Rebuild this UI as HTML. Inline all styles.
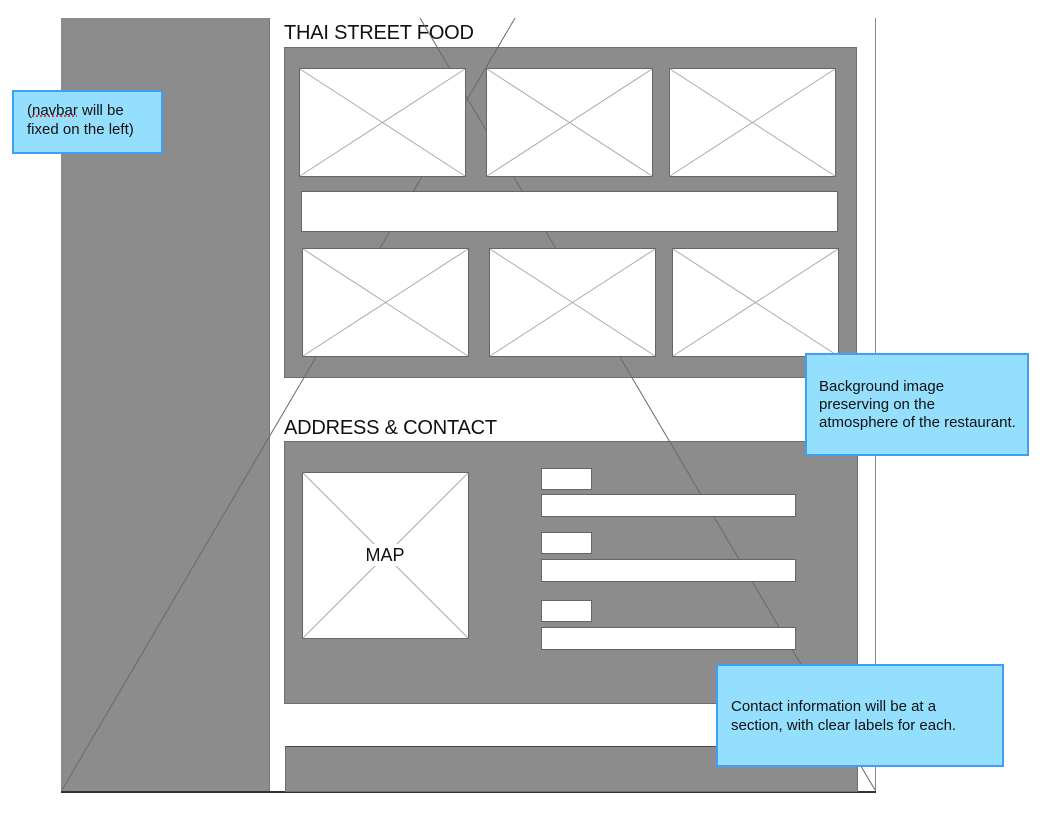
<!DOCTYPE html>
<html><head><meta charset="utf-8"><style>
body{margin:0;width:1042px;height:819px;background:#fff;position:relative;overflow:hidden;font-family:"Liberation Sans",sans-serif}
div{position:absolute;box-sizing:border-box}
.g{background:#8c8c8c;border:1px solid #6e6e6e}
.x{position:absolute}
.note{background:#94dffd;border:2px solid #3f9ef5;font-size:15px;color:#111;white-space:nowrap}
h{position:absolute;font-size:20px;color:#111;white-space:nowrap;letter-spacing:-0.2px}
</style></head><body>
<div style="left:61px;top:18px;width:209px;height:773px;background:#8c8c8c;border-right:1px solid #777"></div>
<div style="left:875px;top:18px;width:1px;height:775px;background:#888"></div>
<div style="left:61px;top:791px;width:815px;height:2px;background:#333"></div>
<h style="left:284px;top:22px">THAI STREET FOOD</h>
<h style="left:284px;top:417px">ADDRESS &amp; CONTACT</h>
<div class="g" style="left:284px;top:47px;width:573px;height:331px"></div>
<div class="g" style="left:284px;top:441px;width:574px;height:263px"></div>
<div class="g" style="left:285px;top:746px;width:573px;height:46px;border-top-color:#444"></div>
<svg class="x" width="1042" height="819" style="left:0;top:0"><g stroke="#6a6a6a" stroke-width="1"><line x1="62" y1="790" x2="515" y2="18"/><line x1="420" y1="18" x2="875" y2="790"/></g></svg>
<svg class="x" width="1042" height="819" style="left:0;top:0">
<g fill="#fff" stroke="#666" stroke-width="1">
<rect x="299.5" y="68.5" width="166" height="108"/><rect x="486.5" y="68.5" width="166" height="108"/><rect x="669.5" y="68.5" width="166" height="108"/>
<rect x="301.5" y="191.5" width="536" height="40"/>
<rect x="302.5" y="248.5" width="166" height="108"/><rect x="489.5" y="248.5" width="166" height="108"/><rect x="672.5" y="248.5" width="166" height="108"/>
<rect x="302.5" y="472.5" width="166" height="166"/>
<rect x="541.5" y="468.5" width="50" height="21"/><rect x="541.5" y="494.5" width="254" height="22"/>
<rect x="541.5" y="532.5" width="50" height="21"/><rect x="541.5" y="559.5" width="254" height="22"/>
<rect x="541.5" y="600.5" width="50" height="21"/><rect x="541.5" y="627.5" width="254" height="22"/>
</g>
<g stroke="#aaa" stroke-width="1">
<path d="M300 69L465 176M465 69L300 176M487 69L652 176M652 69L487 176M670 69L835 176M835 69L670 176M303 249L468 356M468 249L303 356M490 249L655 356M655 249L490 356M673 249L838 356M838 249L673 356M303 473L468 638M468 473L303 638"/>
</g>
<rect x="364" y="544" width="42" height="22" fill="#fff"/>
<text x="385" y="561" text-anchor="middle" font-family="Liberation Sans" font-size="18" fill="#111">MAP</text>
</svg>
<div class="note" style="left:12px;top:90px;width:151px;height:64px;padding:9px 0 0 13px;line-height:19px">(<span style="text-decoration:underline dotted red">navbar</span> will be<br>fixed on the left)</div>
<div class="note" style="left:805px;top:353px;width:224px;height:103px;padding:23px 0 0 12px;line-height:18px">Background image<br>preserving on the<br>atmosphere of the restaurant.</div>
<div class="note" style="left:716px;top:664px;width:288px;height:103px;padding:31px 0 0 13px;line-height:19px">Contact information will be at a<br>section, with clear labels for each.</div>
</body></html>
